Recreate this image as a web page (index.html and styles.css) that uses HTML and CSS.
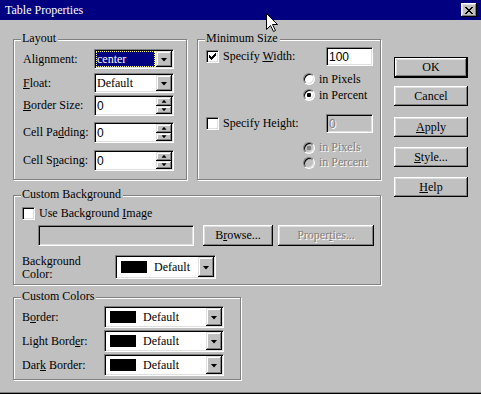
FILE: index.html
```html
<!DOCTYPE html>
<html>
<head>
<meta charset="utf-8">
<title>Table Properties</title>
<link rel="stylesheet" href="styles.css">
</head>
<body>
<div class="window">
  <div class="titlebar">
    <span class="title">Table Properties</span>
    <span class="closebtn"><svg width="8" height="7" viewBox="0 0 8 7" shape-rendering="crispEdges"><path d="M0 0h2v1h-2z M6 0h2v1h-2z M1 1h2v1h-2z M5 1h2v1h-2z M2 2h4v1h-4z M3 3h2v1h-2z M2 4h4v1h-4z M1 5h2v1h-2z M5 5h2v1h-2z M0 6h2v1h-2z M6 6h2v1h-2z"/></svg></span>
  </div>
  <div class="client">
    <div class="main">
      <div class="toprow">
        <div class="group layout">
          <span class="legend">Layout</span>
          <div class="lrow"><span class="lbl">Ali<u>g</u>nment:</span>
            <div class="sunken combo w80"><span class="val selected">center</span><span class="drop"><i class="tri"></i></span></div></div>
          <div class="lrow m4"><span class="lbl"><u>F</u>loat:</span>
            <div class="sunken combo w80"><span class="val">Default</span><span class="drop"><i class="tri"></i></span></div></div>
          <div class="lrow h21 m2"><span class="lbl"><u>B</u>order Size:</span>
            <div class="sunken spin w80"><span class="val sans">0</span><span class="spinbtns"><span class="sb"><i class="tri-up"></i></span><span class="sb"><i class="tri-sm"></i></span></span></div></div>
          <div class="lrow h21 m6"><span class="lbl">Cell Pa<u>d</u>ding:</span>
            <div class="sunken spin w80"><span class="val sans">0</span><span class="spinbtns"><span class="sb"><i class="tri-up"></i></span><span class="sb"><i class="tri-sm"></i></span></span></div></div>
          <div class="lrow h21 m7"><span class="lbl">Cell S<u>p</u>acing:</span>
            <div class="sunken spin w80"><span class="val sans">0</span><span class="spinbtns"><span class="sb"><i class="tri-up"></i></span><span class="sb"><i class="tri-sm"></i></span></span></div></div>
        </div>
        <div class="group minsize">
          <span class="legend">Minimum Size</span>
          <div class="mrow">
            <span class="check"><svg width="7" height="7" viewBox="0 0 7 7" shape-rendering="crispEdges"><path d="M6 0h1v1h-1z M5 1h2v1h-2z M0 2h1v1h-1z M4 2h3v1h-3z M0 3h2v1h-2z M3 3h3v1h-3z M0 4h5v1h-5z M1 5h3v1h-3z M2 6h1v1h-1z"/></svg></span>
            <span class="clabel">Specify <u>W</u>idth:</span>
            <span class="sunken field w47"><span class="val sans">100</span></span>
          </div>
          <div class="radios">
            <div class="rrow"><span class="radio"></span><span>in Pixels</span></div>
            <div class="rrow"><span class="radio"><i class="dot"></i></span><span>in Percent</span></div>
          </div>
          <div class="mrow m11">
            <span class="check"></span>
            <span class="clabel">Specify Height:</span>
            <span class="sunken field w47 disabled"><span class="val sans dis">0</span></span>
          </div>
          <div class="radios m7">
            <div class="rrow r15"><span class="radio disabled"><i class="dot"></i></span><span class="dis">in Pixels</span></div>
            <div class="rrow r15"><span class="radio disabled"></span><span class="dis">in Percent</span></div>
          </div>
        </div>
      </div>
      <div class="group custombg">
        <span class="legend">Custom Background</span>
        <div class="crow"><span class="check"></span><span>Use Background <u>I</u>mage</span></div>
        <div class="brow">
          <span class="sunken field w156 disabled"></span>
          <span class="btn w70 ml9">B<u>r</u>owse...</span>
          <span class="btn w96 ml5 dis">Proper<u>t</u>ies...</span>
        </div>
        <div class="colrow">
          <span class="lbl2">Background<br>Color:</span>
          <div class="sunken combo color w101 h24"><span class="swatch"></span><span class="cval">Default</span><span class="drop"><i class="tri"></i></span></div>
        </div>
      </div>
      <div class="group customcolors">
        <span class="legend">Custom Colors</span>
        <div class="ccrow"><span class="lbl3">B<u>o</u>rder:</span>
          <div class="sunken combo color w120"><span class="swatch"></span><span class="cval">Default</span><span class="drop"><i class="tri"></i></span></div></div>
        <div class="ccrow"><span class="lbl3">Light Bord<u>e</u>r:</span>
          <div class="sunken combo color w120"><span class="swatch"></span><span class="cval">Default</span><span class="drop"><i class="tri"></i></span></div></div>
        <div class="ccrow"><span class="lbl3">Dar<u>k</u> Border:</span>
          <div class="sunken combo color w120"><span class="swatch"></span><span class="cval">Default</span><span class="drop"><i class="tri"></i></span></div></div>
      </div>
    </div>
    <div class="buttons">
      <span class="btn default">OK</span>
      <span class="btn cancel">Cancel</span>
      <span class="btn apply"><u>A</u>pply</span>
      <span class="btn"><u>S</u>tyle...</span>
      <span class="btn"><u>H</u>elp</span>
    </div>
  </div>
  <svg class="cursor" width="13" height="20" viewBox="0 0 13 20"><path d="M0.5 0.5 L0.5 16.5 L4.5 12.5 L7.5 18.5 L9.5 17.5 L6.5 11.5 L11.5 11.5 Z" fill="#fff" stroke="#000" stroke-width="1"/></svg>
</div>
</body>
</html>
```

FILE: styles.css
```css
* { box-sizing: border-box; }
html, body { margin: 0; padding: 0; }
body {
  width: 481px;
  height: 394px;
  overflow: hidden;
  background: #c0c0c0;
  font-family: "Liberation Serif", "Times New Roman", serif;
  font-size: 12px;
  color: #000;
}
u { text-decoration: underline; text-underline-offset: 1px; }
i { display: block; }

.window {
  position: relative;
  width: 481px;
  height: 394px;
  background: #c0c0c0;
  box-shadow: inset 0 -1px #000, inset 0 -2px #808080;
}

.titlebar {
  height: 20px;
  background: #000080;
  color: #fff;
  display: flex;
  align-items: center;
  justify-content: space-between;
  padding: 0 4px 0 5px;
}
.title { line-height: 14px; }
.closebtn {
  width: 16px;
  height: 14px;
  background: #c0c0c0;
  box-shadow: inset -1px -1px #000, inset 1px 1px #fff, inset -2px -2px #808080, inset 2px 2px #dfdfdf;
  display: flex;
  align-items: center;
  justify-content: center;
}
.closebtn svg { fill: #000; }

.client {
  display: flex;
  padding: 19px 13px 0 13px;
}
.main {
  width: 368px;
  display: flex;
  flex-direction: column;
}
.toprow { display: flex; gap: 10px; }

.group {
  position: relative;
  border: 1px solid #808080;
  box-shadow: inset 1px 1px #fff, 1px 1px #fff;
}
.legend {
  position: absolute;
  top: -9px;
  left: 7px;
  padding: 0 2px 0 1px;
  background: #c0c0c0;
  line-height: 14px;
  white-space: nowrap;
}

/* Layout group */
.layout { width: 174px; height: 141px; padding: 9px 0 0 9px; }
.lrow { display: flex; align-items: center; height: 20px; }
.lrow.h21 { height: 21px; }
.lbl { width: 71px; white-space: nowrap; }
.m2 { margin-top: 2px; }
.m4 { margin-top: 4px; }
.m6 { margin-top: 6px; }
.m7 { margin-top: 7px; }
.m11 { margin-top: 11px; }

/* sunken fields */
.sunken {
  border: 1px solid;
  border-color: #808080 #fff #fff #808080;
  box-shadow: inset 1px 1px #000, inset -1px -1px #dfdfdf;
  background: #fff;
  padding: 1px;
  display: flex;
  align-items: stretch;
}
.sunken.disabled { background: #c0c0c0; }
.w47 { width: 47px; }
.w70 { width: 70px; }
.w80 { width: 80px; }
.w96 { width: 96px; }
.w101 { width: 101px; }
.w120 { width: 120px; }
.w156 { width: 156px; }
.h24 { height: 24px; }
.ml5 { margin-left: 5px; }
.ml9 { margin-left: 9px; }

.combo { height: 20px; }
.spin { height: 21px; }
.val {
  flex: 1;
  display: flex;
  align-items: center;
  padding-left: 1px;
  white-space: nowrap;
}
.sans { font-family: "Liberation Sans", Arial, sans-serif; font-size: 12px; }
.val.selected {
  margin: 0 1px 0 0;
  background: #000080;
  color: #fff;
  outline: 1px dotted #ffff80;
  outline-offset: -1px;
}

.drop, .sb {
  width: 16px;
  background: #c0c0c0;
  box-shadow: inset -1px -1px #000, inset 1px 1px #dfdfdf, inset -2px -2px #808080, inset 2px 2px #fff;
  display: flex;
  align-items: center;
  justify-content: center;
  flex: none;
}
.tri {
  width: 7px;
  height: 4px;
  background: #000;
  clip-path: polygon(0 0, 7px 0, 3.5px 4px);
  margin-top: 1px;
}
.tri-sm {
  width: 5px;
  height: 3px;
  background: #000;
  clip-path: polygon(0 0, 5px 0, 2.5px 3px);
}
.tri-up {
  width: 5px;
  height: 3px;
  background: #000;
  clip-path: polygon(2.5px 0, 5px 3px, 0 3px);
}
.spinbtns { display: flex; flex-direction: column; width: 16px; }
.sb { flex: 1; }

/* Minimum size group */
.minsize { width: 184px; height: 141px; padding: 7px 7px 0 8px; }
.mrow { display: flex; align-items: center; height: 19px; }
.clabel { margin-left: 4px; white-space: nowrap; }
.field { height: 19px; margin-left: auto; }
.brow .field { margin-left: 16px; height: 21px; }

.check {
  width: 13px;
  height: 13px;
  flex: none;
  background: #fff;
  border: 1px solid;
  border-color: #808080 #fff #fff #808080;
  box-shadow: inset 1px 1px #000, inset -1px -1px #dfdfdf;
  display: flex;
  align-items: center;
  justify-content: center;
}
.check svg { fill: #000; }

.radios { margin: 5px 0 0 97px; }
.radios.m7 { margin-top: 7px; }
.rrow { display: flex; align-items: center; gap: 4px; height: 16px; white-space: nowrap; }
.rrow.r15 { height: 15px; }
.radio {
  width: 12px;
  height: 12px;
  flex: none;
  border-radius: 50%;
  background: #fff;
  border: 1px solid;
  border-color: #808080 #fff #fff #808080;
  box-shadow: inset 1px 1px #000, inset -1px -1px #dfdfdf;
  display: flex;
  align-items: center;
  justify-content: center;
}
.radio.disabled { background: #c0c0c0; }
.dot { width: 4px; height: 4px; border-radius: 1px; background: #000; }
.radio.disabled .dot { background: #808080; }
.dis { color: #808080; text-shadow: 1px 1px 0 #fff; }

/* buttons */
.buttons {
  margin-left: 13px;
  width: 75px;
  display: flex;
  flex-direction: column;
  gap: 10px;
  padding-top: 18px;
}
.btn {
  height: 20px;
  display: flex;
  align-items: center;
  justify-content: center;
  background: #c0c0c0;
  box-shadow: inset -1px -1px #000, inset 1px 1px #fff, inset -2px -2px #808080, inset 2px 2px #dfdfdf;
  white-space: nowrap;
  flex: none;
}
.btn.default {
  height: 21px;
  border: 1px solid #000;
}
.btn.cancel { margin-top: -2px; }
.btn.apply { margin-top: 1px; }
.brow .btn { height: 21px; }

/* Custom background */
.custombg { width: 368px; height: 90px; margin-top: 15px; padding: 11px 0 0 8px; }
.crow { display: flex; align-items: center; gap: 4px; height: 13px; }
.brow { display: flex; margin-top: 5px; height: 21px; }
.colrow { display: flex; align-items: flex-start; margin-top: 9px; }
.lbl2 { width: 93px; line-height: 13px; }
.color .swatch { width: 26px; height: 12px; background: #000; align-self: center; margin-left: 4px; flex: none; }
.cval { flex: 1; display: flex; align-items: center; margin-left: 7px; }
.combo.color { height: 22px; }
.combo.color.h24 { height: 24px; }

/* Custom colors */
.customcolors { width: 228px; height: 83px; margin-top: 12px; padding: 8px 0 0 8px; display: flex; flex-direction: column; gap: 2px; }
.ccrow { display: flex; align-items: center; height: 22px; }
.lbl3 { width: 82px; white-space: nowrap; }

.cursor { position: absolute; left: 266px; top: 13px; }
```
